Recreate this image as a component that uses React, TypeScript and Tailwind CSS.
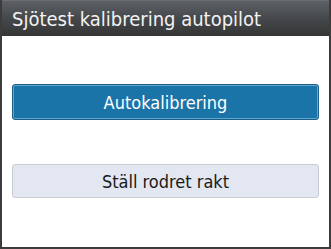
export default function App() {
  return (
    <div className="w-[331px] h-[249px] bg-white flex flex-col border-x-2 border-b-2 border-[#3c3c3c] overflow-hidden" style={{ fontFamily: '"DejaVu Sans Condensed", sans-serif' }}>
      <div className="h-[36px] shrink-0 flex items-center pl-[10px] border-t border-[#6a6e72] bg-gradient-to-b from-[#5c6065] via-[#45484b] to-[#343535]">
        <span className="text-[20px] text-[#f2f2f2] leading-none">Sjötest kalibrering autopilot</span>
      </div>
      <div className="flex flex-col px-[10px] pt-[48px] gap-[44px]">
        <button className="h-[36px] rounded-[3px] bg-[#1b74a8] border border-[#1d5f86] shadow-[inset_0_0_0_1px_#5fa8d4] text-white text-[18px] flex items-center justify-center">
          Autokalibrering
        </button>
        <button className="h-[34px] rounded-[3px] bg-[#e2e7f1] border border-[#c9ccd2] text-[#1a1a1a] text-[18px] flex items-center justify-center">
          Ställ rodret rakt
        </button>
      </div>
    </div>
  );
}
